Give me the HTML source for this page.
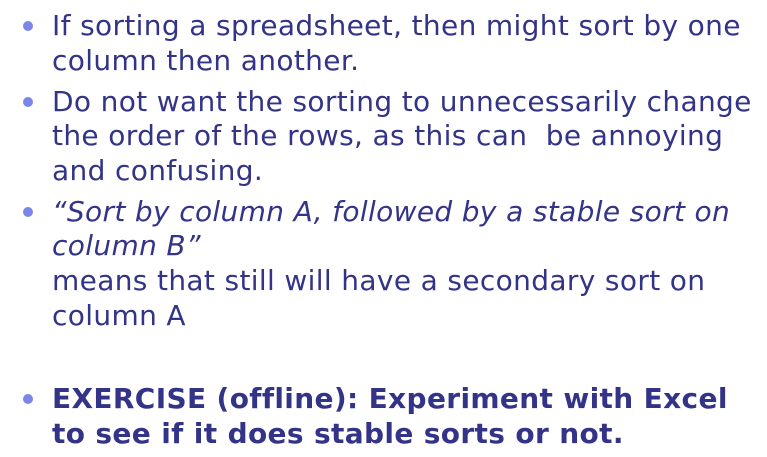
<!DOCTYPE html>
<html><head><meta charset="utf-8"><style>
html,body{margin:0;padding:0;background:#fff;width:767px;height:457px;overflow:hidden;}
body{position:relative;font-family:"DejaVu Sans","Liberation Sans",sans-serif;font-size:28px;letter-spacing:0.35px;color:#333388;}
.l{position:absolute;left:52px;height:34px;line-height:34px;white-space:nowrap;}
.b{position:absolute;left:23px;width:10px;height:10px;border-radius:50%;background:#7b86e8;}
i{font-style:oblique;}
b{font-weight:bold;}
</style></head><body>
<div class="b" style="top:21px"></div>
<div class="l" style="top:9px">If sorting a spreadsheet, then might sort by one</div>
<div class="l" style="top:44px">column then another.</div>
<div class="b" style="top:97px"></div>
<div class="l" style="top:85px">Do not want the sorting to unnecessarily change</div>
<div class="l" style="top:119px">the order of the rows, as this can&nbsp; be annoying</div>
<div class="l" style="top:154px">and confusing.</div>
<div class="b" style="top:207px"></div>
<div class="l" style="top:195px"><i>“Sort by column A, followed by a stable sort on</i></div>
<div class="l" style="top:229px"><i>column B”</i></div>
<div class="l" style="top:264px">means that still will have a secondary sort on</div>
<div class="l" style="top:299px">column A</div>
<div class="b" style="top:394px"></div>
<div class="l" style="top:382px"><b>EXERCISE (offline): Experiment with Excel</b></div>
<div class="l" style="top:417px"><b>to see if it does stable sorts or not.</b></div>
</body></html>
